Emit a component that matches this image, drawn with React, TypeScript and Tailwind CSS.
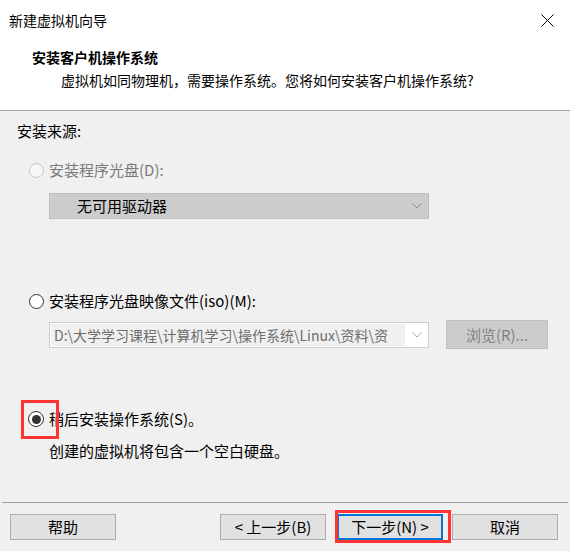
import React from "react";

function Chevron({ color }: { color: string }) {
  return (
    <svg width="10" height="6" viewBox="0 0 10 6" className="block">
      <path d="M0.5 0.5 L5 5 L9.5 0.5" fill="none" stroke={color} strokeWidth="1" />
    </svg>
  );
}

function Radio({ state }: { state: "disabled" | "off" | "on" }) {
  if (state === "disabled") {
    return <div className="w-[15px] h-[15px] rounded-full border border-[#c4c4c4] bg-[#f7f7f7] shrink-0" />;
  }
  if (state === "off") {
    return <div className="w-[15px] h-[15px] rounded-full border border-[#333333] bg-white shrink-0" />;
  }
  return (
    <div className="w-[16px] h-[16px] rounded-full border border-[#333333] bg-white shrink-0 flex items-center justify-center">
      <div className="w-[9px] h-[9px] rounded-full bg-[#333333]" />
    </div>
  );
}

export default function App() {
  return (
    <div
      className="relative w-[570px] h-[551px] bg-[#f0f0f0] flex flex-col text-black overflow-hidden"
      style={{ fontFamily: '"Noto Sans CJK SC", "Noto Sans", sans-serif' }}
    >
      {/* Header */}
      <div className="h-[111px] bg-white border-b border-[#a0a0a0] flex flex-col shrink-0">
        <div className="h-[40px] flex items-center pl-[9px] pr-[16px] text-[14px] leading-[20px]">
          <span>新建虚拟机向导</span>
          <div className="flex-1" />
          <svg width="13" height="13" viewBox="0 0 13 13" className="block">
            <path d="M0.5 0.5 L12.5 12.5 M12.5 0.5 L0.5 12.5" stroke="#000" strokeWidth="1" />
          </svg>
        </div>
        <div className="mt-[7px] pl-[32px] text-[14px] leading-[20px] font-bold">安装客户机操作系统</div>
        <div className="mt-[3px] pl-[61px] text-[14px] leading-[20px]">
          虚拟机如同物理机，需要操作系统。您将如何安装客户机操作系统?
        </div>
      </div>

      {/* Body */}
      <div className="flex flex-col text-[15px]">
        <div className="mt-[10px] pl-[17px] h-[20px] leading-[20px]">安装来源:</div>

        <div className="mt-[19px] h-[20px] flex items-center pl-[29px] gap-[5px] text-[#7a7a7a]">
          <Radio state="disabled" />
          <span className="leading-[20px]">安装程序光盘(D):</span>
        </div>

        <div className="mt-[13px] ml-[49px] w-[380px] h-[26px] bg-[#cccccc] border border-[#bfbfbf] flex items-center pl-[27px] pr-[6px]">
          <span className="leading-[20px] flex-1">无可用驱动器</span>
          <Chevron color="#8a8a8a" />
        </div>

        <div className="mt-[72px] h-[20px] flex items-center pl-[29px] gap-[5px]">
          <Radio state="off" />
          <span className="leading-[20px]">安装程序光盘映像文件(iso)(M):</span>
        </div>

        <div className="mt-[9px] h-[29px] flex items-center pl-[49px]">
          <div className="w-[380px] h-[26px] bg-white border border-[#cccccc] flex items-center pl-[1px] pr-[6px]">
            <div className="w-[354px] h-[22px] bg-[#f0f0f0] overflow-hidden whitespace-nowrap pl-[3px] text-[14px] leading-[22px] text-[#6d6d6d]">
              D:\大学学习课程\计算机学习\操作系统\Linux\资料\资
            </div>
            <div className="flex-1" />
            <Chevron color="#a8a8a8" />
          </div>
          <div className="ml-[17px] w-[102px] h-[29px] bg-[#cccccc] border border-[#bfbfbf] flex items-center justify-center text-[#838383] leading-[20px]">
            浏览(R)...
          </div>
        </div>

        <div className="mt-[60px] h-[20px] flex items-center pl-[28px] gap-[5px]">
          <Radio state="on" />
          <span className="leading-[20px]">稍后安装操作系统(S)。</span>
        </div>

        <div className="mt-[12px] pl-[49px] h-[20px] leading-[20px]">创建的虚拟机将包含一个空白硬盘。</div>
      </div>

      <div className="flex-1" />

      {/* Footer */}
      <div className="mx-[2px] h-px bg-[#a0a0a0]" />
      <div className="h-[48px] flex items-start pt-[11px] pl-[10px] pr-[12px] text-[15px]">
        <div className="w-[106px] h-[26px] bg-[#e1e1e1] border border-[#adadad] flex items-center justify-center leading-[20px]">
          帮助
        </div>
        <div className="flex-1" />
        <div className="w-[106px] h-[26px] bg-[#e1e1e1] border border-[#adadad] flex items-center justify-center leading-[20px]">
          &lt; 上一步(B)
        </div>
        <div className="ml-[11px] w-[106px] h-[26px] bg-[#e1e1e1] border-2 border-[#0078d7] flex items-center justify-center leading-[20px]">
          下一步(N) &gt;
        </div>
        <div className="ml-[9px] w-[106px] h-[26px] bg-[#e1e1e1] border border-[#adadad] flex items-center justify-center leading-[20px]">
          取消
        </div>
      </div>

      {/* Annotation overlays */}
      <div className="absolute left-[21px] top-[400px] w-[38px] h-[39px] border-[3px] border-[#ff3333] pointer-events-none" />
      <div className="absolute left-[335px] top-[510px] w-[116px] h-[33px] border-[3px] border-[#ff3333] pointer-events-none" />
    </div>
  );
}
